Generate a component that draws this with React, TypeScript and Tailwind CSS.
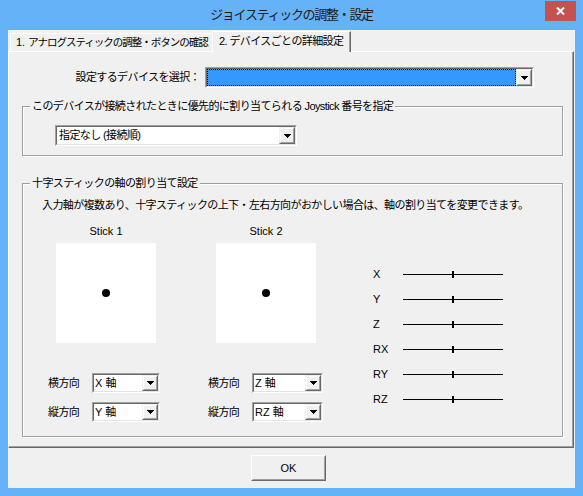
import React from "react";

const JP = "tracking-[-0.6px]";

function Tri() {
  return (
    <svg width="7" height="4" viewBox="0 0 7 4" shapeRendering="crispEdges">
      <rect x="0" y="0" width="7" height="1" fill="#000" />
      <rect x="1" y="1" width="5" height="1" fill="#000" />
      <rect x="2" y="2" width="3" height="1" fill="#000" />
      <rect x="3" y="3" width="1" height="1" fill="#000" />
    </svg>
  );
}

function DropBtn() {
  return (
    <div className="w-[16px] h-full border border-t-[#f0f0f0] border-l-[#f0f0f0] border-r-[#696969] border-b-[#696969] bg-[#f0f0f0]">
      <div className="w-full h-full flex items-center justify-center border border-t-white border-l-white border-r-[#a0a0a0] border-b-[#a0a0a0]">
        <Tri />
      </div>
    </div>
  );
}

function Combo({ cls, children }: { cls: string; children?: React.ReactNode }) {
  return (
    <div className={`flex border border-t-[#a0a0a0] border-l-[#a0a0a0] border-r-white border-b-white ${cls}`}>
      <div className="flex-1 flex min-w-0 border border-t-[#696969] border-l-[#696969] border-r-[#e3e3e3] border-b-[#e3e3e3] bg-white">
        <div className="flex-1 min-w-0 flex items-center whitespace-nowrap">{children}</div>
        <DropBtn />
      </div>
    </div>
  );
}

function StickCol({
  name,
  h,
  v,
  cw,
  cls,
}: {
  name: string;
  h: string;
  v: string;
  cw: string;
  cls: string;
}) {
  return (
    <div className={`w-[116px] flex flex-col ${cls}`}>
      <div className="text-center leading-[14px]">{name}</div>
      <div className="mt-[5px] ml-[8px] w-[100px] h-[100px] bg-white flex items-center justify-center">
        <div className="w-[8px] h-[8px] rounded-full bg-black" />
      </div>
      <div className="mt-[30px] flex items-center h-[20px]">
        <span className={`w-[44px] ${JP}`}>横方向</span>
        <Combo cls={cw}>
          <span className="pl-[1px]">{h}</span>
        </Combo>
      </div>
      <div className="mt-[9px] flex items-center h-[20px]">
        <span className={`w-[44px] ${JP}`}>縦方向</span>
        <Combo cls={cw}>
          <span className="pl-[1px]">{v}</span>
        </Combo>
      </div>
    </div>
  );
}

function AxisRow({ label }: { label: string }) {
  return (
    <div className="h-[25px] flex items-center">
      <span className="w-[30px]">{label}</span>
      <div className="w-[100px] h-[7px] flex items-center">
        <div className="w-[49px] h-[1px] bg-black" />
        <div className="w-[2px] h-[7px] bg-black" />
        <div className="w-[49px] h-[1px] bg-black" />
      </div>
    </div>
  );
}

export default function App() {
  return (
    <div className="w-[583px] h-[496px] bg-[#66b2f8] flex flex-col font-['Liberation_Sans','Noto_Sans_CJK_JP',sans-serif] text-[11px] text-black">
      {/* title bar */}
      <div className="h-[30px] grid grid-cols-[1fr_auto_1fr]">
        <div />
        <div className="self-center text-[13px] tracking-[-1.3px] text-[#1a1a1a] leading-[16px] whitespace-nowrap">
          ジョイスティックの調整・設定
        </div>
        <div className="flex justify-end items-start pr-[7px] pt-[1px]">
          <div className="w-[31px] h-[20px] bg-[#c75050] flex items-center justify-center">
            <svg width="9" height="8" viewBox="0 0 9 8">
              <path d="M1 0.5 L8 7.5 M8 0.5 L1 7.5" stroke="#fff" strokeWidth="2" />
            </svg>
          </div>
        </div>
      </div>

      {/* client */}
      <div className="mx-[8px] h-[458px] bg-[#f0f0f0] flex flex-col">
        {/* tabs */}
        <div className="h-[21px] flex items-end pl-[2px]">
          <div className="w-[202px] h-[18px] border-l border-t border-white bg-[#f0f0f0] pl-[5px] flex items-center whitespace-nowrap overflow-hidden text-[10.5px] tracking-[-1px]">
            <span className="tracking-normal text-[11px] mr-[3px]">1.</span>
            アナログスティックの調整・ボタンの確認
          </div>
          <div
            className={`w-[139px] h-[21px] -mb-[1px] relative z-10 border-l border-t border-r border-l-white border-t-white border-r-[#696969] shadow-[inset_-1px_0_0_#a0a0a0] bg-[#f0f0f0] pl-[6px] pb-[2px] flex items-center whitespace-nowrap ${JP}`}
          >
            2. デバイスごとの詳細設定
          </div>
        </div>

        {/* panel */}
        <div className="w-[566px] h-[397px] border border-t-white border-l-white border-r-[#696969] border-b-[#696969] shadow-[inset_-1px_-1px_0_#a0a0a0] flex flex-col">
          <div className="mt-[15px] flex">
            <div className={`w-[196px] h-[21px] pr-[5px] flex items-center justify-end whitespace-nowrap ${JP}`}>
              設定するデバイスを選択：
            </div>
            <Combo cls="w-[329px] h-[21px]">
              <div className="w-full h-full bg-[#c87814]">
                <div className="w-full h-full border border-dotted border-black bg-[#3399ff] bg-clip-padding" />
              </div>
            </Combo>
          </div>

          <fieldset className="ml-[13px] mt-[11px] w-[541px] border border-[#a0a0a0] shadow-[inset_1px_1px_0_#fff,1px_1px_0_#fff] pb-[9px]">
            <legend className={`ml-[7px] px-[2px] leading-[14px] bg-[#f0f0f0] whitespace-nowrap ${JP}`}>
              このデバイスが接続されたときに優先的に割り当てられる Joystick 番号を指定
            </legend>
            <div className="ml-[32px] mt-[12px]">
              <Combo cls="w-[242px] h-[21px]">
                <span className={`pl-[2px] ${JP}`}>指定なし (接続順)</span>
              </Combo>
            </div>
          </fieldset>

          <fieldset className="ml-[13px] mt-[20px] w-[541px] border border-[#a0a0a0] shadow-[inset_1px_1px_0_#fff,1px_1px_0_#fff] pb-[14px]">
            <legend className={`ml-[7px] px-[2px] leading-[14px] bg-[#f0f0f0] whitespace-nowrap ${JP}`}>
              十字スティックの軸の割り当て設定
            </legend>
            <div className={`pl-[19px] mt-[8px] leading-[14px] whitespace-nowrap ${JP}`}>
              入力軸が複数あり、十字スティックの上下・左右方向がおかしい場合は、軸の割り当てを変更できます。
            </div>
            <div className="mt-[12px] flex">
              <StickCol name="Stick 1" h="X 軸" v="Y 軸" cw="w-[68px] h-[20px]" cls="ml-[25px]" />
              <StickCol name="Stick 2" h="Z 軸" v="RZ 軸" cw="w-[71px] h-[20px]" cls="ml-[44px]" />
              <div className="ml-[49px] mt-[38px] flex flex-col">
                <AxisRow label="X" />
                <AxisRow label="Y" />
                <AxisRow label="Z" />
                <AxisRow label="RX" />
                <AxisRow label="RY" />
                <AxisRow label="RZ" />
              </div>
            </div>
          </fieldset>
        </div>

        {/* bottom */}
        <div className="flex-1 pl-[243px] pt-[7px]">
          <div className="w-[75px] h-[26px] border border-t-white border-l-white border-r-[#696969] border-b-[#696969] bg-[#f0f0f0]">
            <div className="w-full h-full border border-t-[#f0f0f0] border-l-[#f0f0f0] border-r-[#a0a0a0] border-b-[#a0a0a0] flex items-center justify-center">
              OK
            </div>
          </div>
        </div>
      </div>
    </div>
  );
}
